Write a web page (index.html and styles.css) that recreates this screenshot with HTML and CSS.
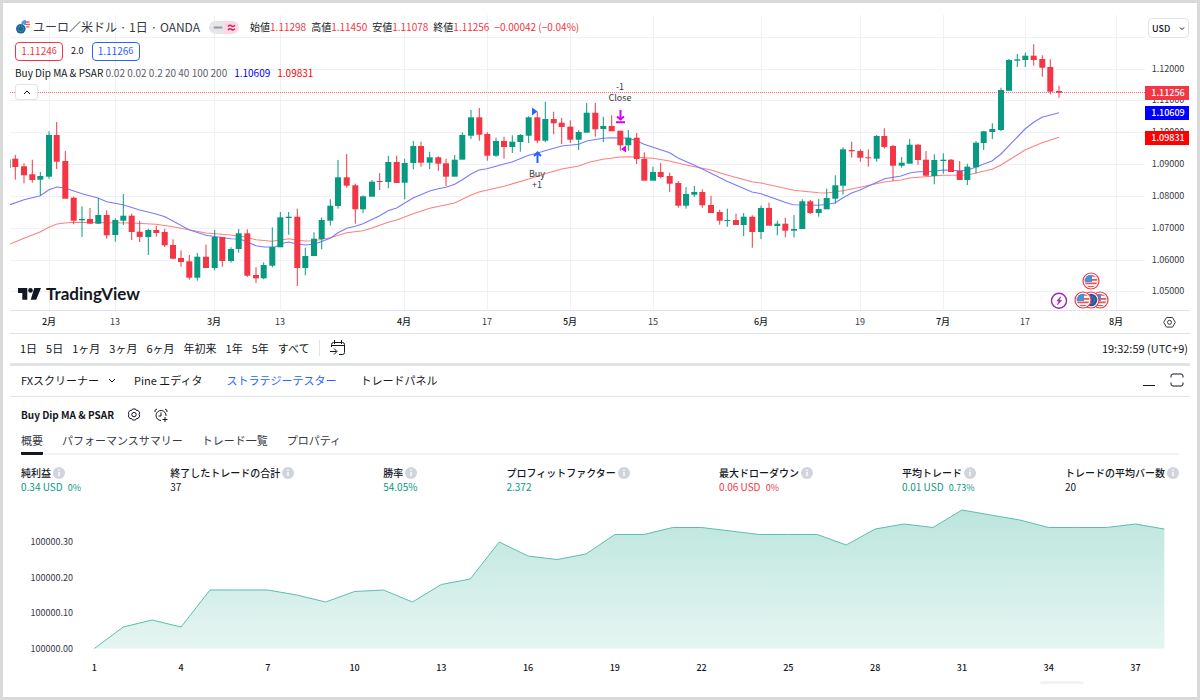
FILE: index.html
```html
<!DOCTYPE html>
<html lang="ja">
<head>
<meta charset="utf-8">
<title>TradingView EURUSD</title>
<link rel="stylesheet" href="styles.css">
</head>
<body>
<svg class="defs" aria-hidden="true">
  <defs>
    <symbol id="info" viewBox="0 0 12 12"><circle cx="6" cy="6" r="6" fill="#d1d4dc"/><path d="M6 5v4M6 2.6v1.3" stroke="#fff" stroke-width="1.4"/></symbol>
    <symbol id="flag-us" viewBox="-9 -9 18 18">
      <circle r="8" fill="#fff" stroke="#f23645" stroke-width="1.2"/>
      <clipPath id="disc"><circle r="6.3"/></clipPath>
      <g clip-path="url(#disc)"><rect x="-7" y="-7" width="14" height="14" fill="#fff"/><path d="M-7-5h14M-7-1.2h14M-7 2.4h14M-7 5.8h14" stroke="#ef5350" stroke-width="1.7"/><rect x="-7" y="-7" width="8" height="8" fill="#4a90d9"/></g>
    </symbol>
    <symbol id="flag-eu" viewBox="-9 -9 18 18">
      <circle r="8" fill="#fff" stroke="#f23645" stroke-width="1.2"/><circle r="6.3" fill="#1e5aa8"/><circle r="3.4" fill="none" stroke="#c9a83a" stroke-dasharray="1 1.4"/>
    </symbol>
  </defs>
</svg>
<main class="page">
  <section class="chart">
    <svg id="price" class="plot" viewBox="10 15 1180 318" role="img" aria-label="EURUSD"></svg>
    <div class="legend">
      <div class="row symbol">
        <svg class="pair" viewBox="0 0 16 16"><circle cx="10.2" cy="5.3" r="4.6" fill="#fff"/><path d="M8 3h6.5M9 5.4h6M9 7.8h5.4" stroke="#ef5350" stroke-width="1.3"/><path d="M6 5a5 5 0 0 1 5-4v5H6z" fill="#4a9be0"/><circle cx="5.8" cy="9.8" r="5.4" fill="#fff"/><circle cx="5.8" cy="9.8" r="4.8" fill="#1565a9"/><circle cx="5.8" cy="9.8" r="2.8" fill="none" stroke="#b5a642" stroke-dasharray="1 1.2"/></svg>
        <span class="title">ユーロ／米ドル · 1日 · OANDA</span>
        <svg class="pill" viewBox="0 0 30 13"><path d="M15 0H6.500a6.500 6.500 0 0 0 0 13H15z" fill="#e6e6ea"/><path d="M15 0h8.500a6.500 6.500 0 0 1 0 13H15z" fill="#fbd9e4"/><path d="M5.500 6.500h7" stroke="#9598a1" stroke-width="2" stroke-linecap="round"/><path d="M19 5.500q1.800-2 3.500-.6t3.500-.6M19 9q1.800-2 3.500-.6t3.500-.6" stroke="#d81b60" stroke-width="1.400"/></svg>
        <span class="ohlc">始値<b>1.11298</b></span>
        <span class="ohlc">高値<b>1.11450</b></span>
        <span class="ohlc">安値<b>1.11078</b></span>
        <span class="ohlc">終値<b>1.11256</b></span>
        <span class="ohlc"><b>−0.00042 (−0.04%)</b></span>
      </div>
      <div class="row quote">
        <button class="sell">1.1124<small>6</small></button>
        <span>2.0</span>
        <button class="buy">1.1126<small>6</small></button>
      </div>
      <div class="row study">
        <span>Buy Dip MA &amp; PSAR <span class="args">0.02 0.02 0.2 20 40 100 200</span></span>
        <span class="fast">1.10609</span><span class="slow">1.09831</span>
      </div>
      <button class="collapse" aria-label="折りたたむ"><svg viewBox="0 0 8 5"><path d="M1 4l3-3 3 3"/></svg></button>
    </div>
    <div class="currency">
      <select aria-label="通貨"><option>USD</option></select>
      <svg class="caret" viewBox="0 0 8 5"><path d="M2 1.500l2 2 2-2"/></svg>
    </div>
  </section>

  <nav class="ranges">
    <button>1日</button><button>5日</button><button>1ヶ月</button><button>3ヶ月</button><button>6ヶ月</button><button>年初来</button><button>1年</button><button>5年</button><button>すべて</button>
    <button class="goto" aria-label="日付へ移動"><svg viewBox="0 0 16 16"><path d="M1.500 7V4.500q0-2 2-2h9q2 0 2 2v8q0 2-2 2H9M1.500 5.500h13M4.500 0v4M11.500 0v4M0 11.500h6.500M4 8.500l3 3-3 3"/></svg></button>
    <time class="clock">19:32:59 (UTC+9)</time>
  </nav>

  <nav class="panels">
    <button>FXスクリーナー<svg class="chev" viewBox="0 0 8 5"><path d="M1 1l3 3 3-3"/></svg></button>
    <button>Pine エディタ</button>
    <button class="active">ストラテジーテスター</button>
    <button>トレードパネル</button>
    <span class="window">
      <button aria-label="最小化"><svg viewBox="0 0 14 14"><path d="M1 12.500h12"/></svg></button>
      <button aria-label="最大化"><svg viewBox="0 0 14 14"><path d="M1 4.500V3q0-2 2-2h8q2 0 2 2v1.500M1 9.500V11q0 2 2 2h8q2 0 2-2V9.500"/></svg></button>
    </span>
  </nav>

  <section class="tester">
    <header class="strategy">
      <h1>Buy Dip MA &amp; PSAR</h1>
      <button aria-label="設定"><svg viewBox="0 0 14 14"><path d="M5.500 1h3l.8 1.400 1.700-.1 1.700 2.500-.6 1.500.6 1.700-1.600 2.600-1.700-.1-.9 1.500h-3l-.9-1.500-1.700.1L1.300 8l.6-1.700-.6-1.500L3 2.300l1.700.1z"/><circle cx="7" cy="6.600" r="2.200"/></svg></button>
      <button aria-label="アラート"><svg viewBox="0 0 14 14"><path d="M1 4q-.8-2.300 2-3M13 4q.8-2.300-2-3M7 12.500A5 5 0 1 1 12 8M7 4.500V8H4.500M11 9v5M8.500 11.500h5"/></svg></button>
    </header>
    <nav class="tabs">
      <button class="active">概要</button><button>パフォーマンスサマリー</button><button>トレード一覧</button><button>プロパティ</button>
    </nav>
    <dl class="metrics">
      <div><dt>純利益<svg><use href="#info"/></svg></dt><dd class="up">0.34 USD <small>0%</small></dd></div>
      <div><dt>終了したトレードの合計<svg><use href="#info"/></svg></dt><dd>37</dd></div>
      <div><dt>勝率<svg><use href="#info"/></svg></dt><dd class="up">54.05%</dd></div>
      <div><dt>プロフィットファクター<svg><use href="#info"/></svg></dt><dd class="up">2.372</dd></div>
      <div><dt>最大ドローダウン<svg><use href="#info"/></svg></dt><dd class="down">0.06 USD <small>0%</small></dd></div>
      <div><dt>平均トレード<svg><use href="#info"/></svg></dt><dd class="up">0.01 USD <small>0.73%</small></dd></div>
      <div><dt>トレードの平均バー数<svg><use href="#info"/></svg></dt><dd>20</dd></div>
    </dl>
    <svg id="equity" class="plot" viewBox="10 496 1180 186" role="img" aria-label="エクイティ"></svg>
    <div class="handle"></div>
  </section>
</main>
<script src="chart.js"></script>
</body>
</html>
```
FILE: styles.css
```css
* { box-sizing: border-box; }
body {
  margin: 0;
  color: #131722;
  font: 11px/16px "Noto Sans CJK JP", "Noto Sans", sans-serif;
}
button {
  padding: 0;
  border: 0;
  background: none;
  color: inherit;
  font: inherit;
  white-space: nowrap;
}
svg { display: block; fill: none; stroke-width: 1; }
.defs { position: absolute; width: 0; height: 0; }
.page {
  min-height: 100vh;
  padding: 12px 7px 0;
  border: 3px solid #d9d9d9;
  background: #fff;
}
.plot { width: 100%; height: auto; }
.plot text { fill: #363a45; font-size: 9px; }
.plot .month { fill: #131722; font-weight: 500; }
.plot .tag { fill: #fff; font-weight: 500; }
.plot .count { fill: #131722; font-weight: 500; }
.plot .brand { fill: #131722; font: 700 17px Lato, sans-serif; }

.chart { position: relative; }
.legend {
  position: absolute;
  top: 4px;
  left: 5px;
  display: grid;
  justify-items: start;
}
.row { display: flex; align-items: center; white-space: nowrap; }
.symbol { height: 16px; gap: 5px; font-size: 10px; }
.pair { width: 16px; height: 16px; margin-right: -3px; }
.title { font-size: 12px; color: #363a45; }
.pill { width: 30px; height: 13px; margin: 0 6px 0 4px; }
.ohlc b { color: #f23645; font-weight: 400; }
.quote { gap: 8px; height: 20px; margin-top: 6px; font-size: 10px; }
.quote button { width: 48px; height: 19px; border: 1px solid; border-radius: 4px; font-size: 10px; }
.quote small { position: relative; top: -1px; font-size: 9px; }
.quote span { font-size: 9px; }
.sell { color: #f23645; }
.buy { color: #2962ff; }
.study { gap: 7px; height: 16px; margin-top: 4px; font-size: 10px; }
.study .args { color: #5d606b; }
.study .fast { color: #0000ff; }
.study .slow { color: #ff0000; }
.collapse {
  display: grid;
  place-items: center;
  width: 23px;
  height: 16px;
  margin-top: 3px;
  border: 1px solid #e0e3eb;
  border-radius: 3px;
  background: #fff;
}
.collapse svg, .chev, .caret { width: 8px; height: 5px; stroke: #131722; }
.currency {
  position: absolute;
  top: 3px;
  right: 1px;
  display: grid;
  align-items: center;
  width: 41px;
  height: 20px;
  border: 1px solid #e0e3eb;
  border-radius: 4px;
  background: #fff;
}
.currency > * { grid-area: 1 / 1; }
.currency select {
  width: 100%;
  padding: 0 3px;
  appearance: none;
  border: 0;
  background: none;
  color: #131722;
  font: 500 9px "Noto Sans CJK JP", sans-serif;
}
.caret { justify-self: end; margin-right: 2px; pointer-events: none; }

.ranges {
  display: flex;
  align-items: center;
  gap: 9px;
  height: 30px;
  padding: 0 2px 2px 10px;
  border-top: 1px solid #e0e3eb;
}
.goto { padding-left: 10px; border-left: 1px solid #e0e3eb; }
.goto svg { width: 16px; height: 16px; stroke: #131722; }
.clock { margin-left: auto; }

.panels {
  display: flex;
  align-items: center;
  gap: 24px;
  height: 34px;
  padding: 0 6px 2px 11px;
  border-top: 3px solid #e0e3eb;
  border-bottom: 1px solid #e0e3eb;
}
.panels > button { display: flex; align-items: center; }
.chev { margin-left: 9px; }
.panels > button:first-child { margin-right: -6px; }
.panels .active { color: #2962ff; }
.window { display: flex; gap: 14px; margin-left: auto; }
.window svg { width: 14px; height: 14px; stroke: #131722; }

.tester { padding-top: 7px; }
.strategy { display: flex; align-items: center; gap: 13px; height: 22px; padding-left: 11px; }
.strategy h1 { margin: 0; font-size: 10px; font-weight: 700; }
.strategy svg { width: 14px; height: 14px; stroke: #131722; }
.tabs { display: flex; gap: 19px; margin: 3px 11px 0; border-bottom: 2px solid #f0f3fa; color: #363a45; }
.tabs button { height: 26px; margin-bottom: -2px; padding-bottom: 1px; border-bottom: 3px solid transparent; }
.tabs .active { border-color: #131722; border-radius: 1px; }
.metrics {
  display: flex;
  justify-content: space-between;
  margin: 10px 11px 0;
  white-space: nowrap;
}
.metrics dt { display: flex; align-items: center; gap: 2px; font-size: 10px; font-weight: 500; line-height: 15px; }
.metrics dt svg { width: 12px; height: 12px; }
.metrics dd { margin: 0; font-size: 10px; line-height: 14px; }
.metrics small { margin-left: 3px; font-size: 9px; }
.up { color: #089981; }
.down { color: #f23645; }
.handle { width: 44px; height: 3px; margin: 0 106px 0 auto; border-radius: 3px 3px 0 0; background: #f0f3fa; }
```
FILE: chart.js
```js
// Candle rows: x, direction, body top, body bottom, wick top, wick bottom
const candles = `15.3 r 158.7 167 155 179.7
24 r 166.3 175.3 163.3 183.3
32.3 r 174.3 180 159.7 182.7
40.3 g 176 179.7 172 195.7
49 g 135 176.7 131.3 178.7
56.7 r 135 161.7 122 169
65.3 r 161 198.7 151 198
73.7 r 197.7 220.7 196.7 224.3
82 g 219 220.3 206.3 237
90 r 219 223.7 208 224
98.3 g 215 223.7 198 224
106.7 r 215 235.3 210.3 238.7
115.3 g 220 235 218.3 241.7
123.3 g 215.7 220.7 194 225
131.7 r 215.7 232 213.7 240
139.7 r 231.7 237 220.7 242
148.3 g 230 237 228.7 255
156.3 r 230 233 226 236.7
164.7 r 232 245.3 228.7 247
173 r 245 258.7 239.3 259.3
181 r 258 262 250.3 266.7
189.3 r 261.3 277.7 255 279.7
197.3 g 256.7 277.7 253 280.7
206 r 256.7 268 244.7 268
214.7 g 237 268 230 270.3
222.3 r 237 261 237 266.7
231 g 249 261 247.3 262.7
238.7 g 233.3 249 229 252.7
247.3 r 233.3 275.7 229.3 277
256 r 275 278.3 267.3 283
263.7 g 265 278.3 262.3 279.3
272.3 g 247 265.7 227.3 267.3
280.3 g 217.3 247.3 212 247
288.7 g 216.7 218 212 234.7
297.3 r 216.7 268 208.7 286
305.3 g 256 268 247.7 275.3
314 g 238.7 256 232.3 256
321.7 g 220 239 217.3 249.3
330.3 g 205.7 220.7 199.3 225.7
338 g 177.3 206 160 208.7
346.7 r 177.3 185.7 154 187.7
355.3 r 185.3 209.3 183.7 223.7
363 g 196.3 209.3 195.3 213.3
372 g 181.7 196.7 180 196
379.7 r 181 182 173 190
388.3 g 162 182 155.7 188.3
396.7 r 162 183 155.7 183
404.7 g 163 182.7 158.7 199.3
413.3 g 146 163 141 169.3
421 r 146 162.7 141.7 166.7
429.7 g 157.3 162.7 151.7 169
438.3 r 157.3 163.7 156.3 171
446 r 163.3 176.7 158.7 186
454.7 g 159.7 176.7 155 176
462.3 g 135 159.7 132.3 159
471 g 117.3 135.7 110 139
479.3 r 117.3 134.7 108 140.7
487.3 r 134 155.7 132.3 160.7
496 g 141 155.7 137.7 157
504 r 141 147 136.7 158.7
512.3 g 141.7 147 135.3 153
520.3 g 135 142 134 151.7
528.7 g 117.3 135.7 116.3 143
537.3 r 117.3 140.7 111.7 143.3
545.3 g 119 140.7 101.7 142
553.7 r 119 123.3 111.7 134.3
561.7 r 122.7 127 118 144
570.3 r 126.7 139.7 120.3 143
578.7 g 132 139.7 130 150
586.7 g 112.7 132.7 103 132
595.3 r 112.7 129.3 103 136.7
603.3 g 126 129 116.7 142
611.7 r 126 131.3 115.3 131
620.3 r 130.7 145.3 130.7 150.7
628.3 g 137.7 145.3 130 150.7
636.7 r 137.7 159 133 164
644.3 r 158.7 180.7 152.3 180
653 g 172 180.7 166.7 180
660.7 r 172 177 163 178.3
669.7 r 176 183.7 172.7 192
678.3 r 183 205.7 181 207.7
686 g 194 205.7 187 208.7
694.3 g 192 194.7 186 197
702.3 r 192 205.3 189.3 207.7
711 r 205 213 195.7 213
719.7 r 212 220.7 209.7 224.7
727.3 g 220 221 208.7 226.7
736 r 220 225 213.7 225
743.7 g 216.7 225 213 236
752.3 r 216.7 232 215.3 247.7
761 g 208 232 205.7 239
769 r 208 225.7 202.7 225
777.3 g 223.7 226 220.7 235.3
785.3 r 223.7 230.7 217.7 237.3
794 g 229 230.7 215 237.3
802.3 g 201.3 229 199.3 229
810.3 r 201.3 213 200 214
818.7 g 209 213 199 216.7
826.7 g 198 209.3 188.7 209
835.3 g 185.3 198.7 175.3 203.7
843 g 149.3 185.7 147.3 194.7
851.7 r 150 151.3 141.7 157.7
860.3 r 151 157.7 149.3 161.7
868.3 r 157.3 158.3 149.3 166.7
876.7 g 136 158.7 135 161.7
884.3 r 136 147 128.3 148.7
893 r 146 165.7 144.7 181
901.7 g 162.7 165.7 157 167.7
909.7 g 144.7 163.7 139 163
918 r 144.7 160 144 164.7
926 r 159.7 175.7 151 176
934.3 g 160 176 154.3 184.3
943.3 g 159.7 161 153.3 173.7
951 r 159.7 172 159 172
959.7 r 171 180 161 180
967.3 g 166.7 180 163.7 185
976 g 142.7 167.3 141 173.3
983.7 g 131.3 143 131 150
992.3 g 129 132 123.3 139
1001 g 90 130 87.7 131.3
1009 g 60 90.7 59 91
1017.3 g 59.3 60.7 54 67
1025.3 g 55.7 60 52.7 67
1033.7 r 55.7 60 44.3 65.7
1042.3 r 59 67.7 55.3 76.7
1050.3 r 67 91.7 59.3 94.3
1059 r 91 92.7 85.7 97.7`.split("\n").map(r => r.split(" "));

const fast = "10,204.7 24,199.7 40.3,195.7 49,189.7 57,187 65,188 82,193.7 98,198 106.7,201.7 123,204.7 139.7,210 156,214 165,216.7 189,229.7 206,235.3 231,238.7 240,239 256,245.7 264,247 275,247 283,243.3 288.7,242 297,244 305.3,245 314,244.3 330.3,238.3 338,232.7 346.7,228.3 355.3,226.3 363,223.7 379.7,215.7 388,210.7 396.7,208 413,198 429.7,191 438,188.7 446,187.3 454.7,184.3 462,180 471,174 479,170 487,168.7 504,164 512,162 528.7,155.3 537,153.3 545,150.7 561.7,146 578.7,144.3 586.7,141 603,138.3 611.7,137.7 628,138.3 636.7,140.7 644,144.3 669.7,152.7 678,158 694,165 711,173.3 727,181.3 752,192 761,193.7 785,202.3 793,204.7 818.7,205.3 826.7,204.3 835,203 843,197.7 851.7,193 860,190 868,186.3 884.7,178.7 901,176 909.7,173 918,171.7 934,171.3 943,170 959.7,170.7 968,170 976,167 983.7,164 992,161 1001,154 1009,145.7 1025,129 1034,122 1042,117.3 1059,112.7";
const slow = "10,244 24,238.3 40,232 49,227.3 57,224 65,223 74,222.3 131,223 156,224.3 173,226.7 206,233 222,234.3 240,236 256,239.7 272,241.3 280,240 289,238.7 297,240.3 305,241 314,240.7 330,237.7 346.7,232.7 363,230.7 372,228 388,222.3 396.7,220 413,213.7 429.7,208.3 454.7,203 471,195 479,192 504,186.3 528.7,179 545,173.7 561.7,169 578.7,166 590,162 603,159.3 620,157 630,156.7 653,158.3 669.7,161 686,165 711,170 727,175 752,181.7 761,183 794,190.3 818.7,192.7 826.7,193 843,190.7 860,187.3 884,182 901,180 909.7,178 934,176 943,175.3 968,175 976,173 992,169.3 1001,165 1009,160 1025,150 1042,142.7 1059,137.3";

const dates = [[49, "2月"], [115, "13"], [214, "3月"], [280, "13"], [404, "4月"], [487, "17"], [570, "5月"], [653, "15"], [761, "6月"], [860, "19"], [943, "7月"], [1025, "17"], [1116, "8月"]];
const prices = [[69, "1.12000"], [100, "1.11000"], [132, "1.10000"], [164, "1.09000"], [196, "1.08000"], [228, "1.07000"], [260, "1.06000"], [291, "1.05000"]];
const hues = { r: "#f23645", g: "#089981" };
const label = (x, y, s, cls = "", anchor = "middle") => `<text x="${x}" y="${y}" class="${cls}" text-anchor="${anchor}">${s}</text>`;

let p = "";
for (const [x] of dates) p += `<path d="M${x}.500 15V310" stroke="#f0f1f4"/>`;
p += `<path d="M10 37.500H1145" stroke="#f0f1f4"/>`;
for (const [y] of prices) p += `<path d="M10 ${y}.500H1145" stroke="#f0f1f4"/>`;
p += `<path d="M10 159.500v8.500" stroke="#5bb8a8" stroke-width="2"/>`;
p += `<polyline points="${slow}" stroke="#ff8080" stroke-width="1.1"/><polyline points="${fast}" stroke="#7a7aff" stroke-width="1.1"/>`;
for (const [x, dir, top, bottom, high, low] of candles) {
  p += `<path d="M${x} ${high}V${low}" stroke="${hues[dir]}"/><rect x="${x - 3}" y="${top}" width="6" height="${Math.max(1, bottom - top)}" fill="${hues[dir]}"/>`;
}
p += `<path d="M10 92.500H1145" stroke="#f23645" stroke-opacity=".75" stroke-dasharray="1 1"/>`;
p += `<path d="M532 107.500l5.500 4-5.500 4z" fill="#2962ff"/><path d="M537.500 163v-9M534 156l3.500-3.500 3.500 3.500" stroke="#2962ff" stroke-width="2"/>`;
p += label(537, 177, "Buy") + label(537, 188, "+1") + label(620, 90, "-1") + label(620, 101, "Close");
p += `<path d="M620.500 110v9M617 116.500l3.500 3 3.500-3M616 122.300h9" stroke="#d500f9" stroke-width="2"/><path d="M626 145.500v7l-5-3.500z" fill="#d500f9"/>`;
p += `<path d="M18 288h9.300v11.700h-5V293H18zM34.300 288H41l-4.800 11.700h-5.500z" fill="#131722"/><circle cx="30.500" cy="290.400" r="2.300" fill="#131722"/>` + label(46, 300, "TradingView", "brand", "start");
p += `<path d="M10 310.500H1190" stroke="#e0e3eb"/>`;
for (const [x, s] of dates) p += label(x, 325, s, s.endsWith("月") ? "month" : "");
for (const [y, s] of prices) p += label(1168, y + 3, s);
for (const [y, s, hue] of [[86, "1.11256", "#f23645"], [106, "1.10609", "#0000ff"], [131, "1.09831", "#ff0000"]]) {
  p += `<rect x="1145" y="${y}" width="44" height="14" fill="${hue}"/>` + label(1168, y + 10, s, "tag");
}
p += `<circle cx="1059" cy="300.700" r="7.500" fill="#fff" stroke="#9c27b0" stroke-width="1.400"/><path d="M1060.800 296.500l-4 4.500h2.200l-1.600 4 4.300-4.700h-2.300z" fill="#9c27b0" stroke="#9c27b0" stroke-width=".5"/>`;
for (const [x, y, flag] of [[1100, 300, "us"], [1091, 300, "eu"], [1083, 300, "us"], [1091, 281, "us"]]) {
  p += `<use href="#flag-${flag}" x="${x - 9}" y="${y - 9}" width="18" height="18"/>`;
}
p += `<path d="M1166.500 317.500h6l2.800 4.800-2.800 4.800h-6l-2.800-4.800z" stroke="#363a45"/><circle cx="1169.500" cy="322.300" r="2" stroke="#363a45"/>`;
document.getElementById("price").innerHTML = p;

const equity = [649.5, 628, 621, 628, 591, 591, 591, 596, 603, 592.5, 591, 603, 585.5, 580, 543, 557, 560.5, 555, 535.5, 535.5, 528.5, 528.5, 532, 535.5, 535.5, 535.5, 546, 530, 525, 528.5, 511, 516, 521, 528.5, 528.5, 528.5, 525, 530];
const step = 28.92;
const line = equity.map((y, i) => `${94.3 + i * step},${y}`).join(" ");
let e = `<linearGradient id="fade" gradientUnits="userSpaceOnUse" x1="0" y1="511" x2="0" y2="650"><stop offset="0" stop-color="#bce6dd"/><stop offset="1" stop-color="#e6f5f2"/></linearGradient>`;
e += `<polygon points="94.3,649.5 ${line} 1164.3,649.5" fill="url(#fade)"/><polyline points="${line}" stroke="#5bbfae"/>`;
for (const [y, s] of [[546, "100000.30"], [582, "100000.20"], [617, "100000.10"], [653, "100000.00"]]) e += label(73, y, s, "", "end");
for (let n = 1; n <= 37; n += 3) e += label(94.3 + (n - 1) * step, 672, n, "count");
document.getElementById("equity").innerHTML = e;
```
